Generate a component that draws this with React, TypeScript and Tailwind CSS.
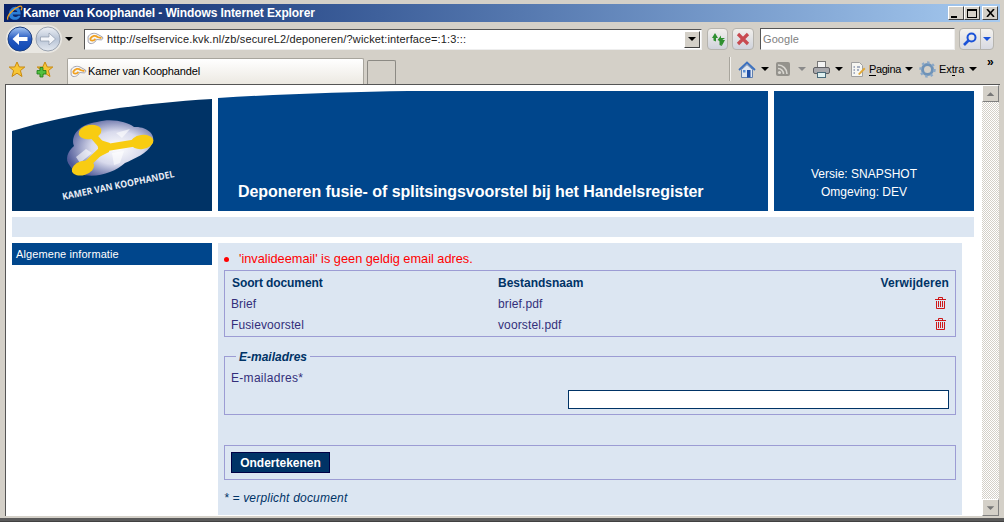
import React from 'react';

const UI = "font-['Liberation_Sans',Arial,sans-serif]";

function Caret({ dim }: { dim?: boolean }) {
  return <span className={`inline-block w-0 h-0 border-x-[4px] border-x-transparent border-t-[4px] ${dim ? 'border-t-[#8a8a8a]' : 'border-t-black'}`} />;
}

function PageIcon() {
  return (
    <svg width="17" height="14" viewBox="0 0 17 14">
      <path d="M1 5C2.5 1.5 7 .5 10 2L15.5 5C16.5 6.5 15 8.5 13 7.8L9.5 7.5C8 11.5 3 13 1.2 10Z" fill="#f6f6f6" stroke="#a4a4b0" />
      <path d="M3 7C5 3.5 8.5 3 10.5 5L14.5 6.2M3 7C4 9.5 6.5 9 8.5 6.8" fill="none" stroke="#f0a020" strokeWidth="1.8" />
    </svg>
  );
}

function NavButton({ back }: { back?: boolean }) {
  const id = back ? 'navBack' : 'navFwd';
  return (
    <svg width="26" height="26" viewBox="0 0 26 26">
      <defs>
        <linearGradient id={id} x1="0" y1="0" x2="0" y2="1">
          <stop offset="0" stopColor={back ? '#a8c8f4' : '#eef1f6'} />
          <stop offset="0.5" stopColor={back ? '#2458c0' : '#b8c4d6'} />
          <stop offset="1" stopColor={back ? '#0f49b4' : '#e4e9f0'} />
        </linearGradient>
      </defs>
      <circle cx="13" cy="13" r="12" fill={`url(#${id})`} stroke={back ? '#1c3f80' : '#9aa3b0'} />
      {back ? (
        <path d="M5.5 13L12 7V11H20.5V15H12V19Z" fill="#fff" />
      ) : (
        <path d="M20.5 13L14 7V11H5.5V15H14V19Z" fill="#f4f6fa" stroke="#8c98aa" strokeWidth="0.7" />
      )}
    </svg>
  );
}

function Star({ plus }: { plus?: boolean }) {
  return (
    <svg width="18" height="17" viewBox="0 0 18 17">
      <path d="M9 1L11.3 6H16.8L12.4 9.6L14 15.5L9 12.2L4 15.5L5.6 9.6L1.2 6H6.7Z" fill="#f7c637" stroke="#c98a10" />
      {plus && <path d="M5 6.5V9.5H2V13H5V16H8V13H11V9.5H8V6.5Z" fill="#52c040" stroke="#1c7a18" strokeWidth="0.8" transform="translate(-1,0)" />}
    </svg>
  );
}

function Trash() {
  return (
    <svg width="11" height="12" viewBox="0 0 11 12" fill="none" stroke="#cc0000" strokeWidth="0.9">
      <path d="M0 2.5H11M3.5 2.5V.5H7.5V2.5" />
      <path d="M1.5 4V11.5H9.5V4" />
      <path d="M3.5 4V10M5.5 4V10M7.5 4V10" />
    </svg>
  );
}

function Logo() {
  return (
    <svg width="200" height="120" viewBox="0 0 200 120" className="block">
      <defs>
        <radialGradient id="cloud" cx="0.58" cy="0.5" r="0.6">
          <stop offset="0" stopColor="#ffffff" />
          <stop offset="0.5" stopColor="#d8daec" />
          <stop offset="1" stopColor="#4f5a98" />
        </radialGradient>
      </defs>
      <path d="M0 40C60 22 130 12 200 8V120H0Z" fill="#003366" />
      <path d="M58 75C52 68 56 60 62 55C58 44 68 33 85 31C100 27 115 31 122 36C135 35 145 44 140 53C136 62 122 68 113 72C100 84 70 92 58 75Z" fill="url(#cloud)" />
      <path d="M64 66L74 58L80 62L68 72ZM100 62L112 60L108 72L102 74ZM104 42L118 38L110 47Z" fill="#ffffff" opacity="0.6" />
      <path d="M78 41L92 57L129 51M92 57L71 77" fill="none" stroke="#f8cc12" strokeWidth="7" />
      <path d="M85 48L98 52L97 61L87 66Z" fill="#f8cc12" />
      <ellipse cx="78" cy="41" rx="11.5" ry="7" fill="#f8cc12" transform="rotate(-10 78 41)" />
      <ellipse cx="130" cy="51" rx="11.5" ry="7" fill="#f8cc12" transform="rotate(-8 130 51)" />
      <ellipse cx="71" cy="77" rx="11.5" ry="7" fill="#f8cc12" transform="rotate(-18 71 77)" />
      <text x="0" y="0" transform="translate(51 109) rotate(-11.6)" fill="#e8ecf4" fontFamily="'Open Sans', sans-serif" fontSize="9.5" fontWeight="700" textLength="114" lengthAdjust="spacingAndGlyphs">KAMER VAN KOOPHANDEL</text>
    </svg>
  );
}

export default function App() {
  return (
    <div className={`w-[1004px] h-[522px] bg-[#d4d0c8] overflow-hidden flex flex-col pt-1 px-1 border-b border-[#404040] ${UI}`}>
      {/* title bar */}
      <div className="h-[18px] shrink-0 flex items-center bg-gradient-to-r from-[#0a246a] to-[#a6caf0] text-white">
        <svg width="17" height="18" viewBox="0 0 18 18" className="ml-0.5">
          <path d="M3 10.5C3 6 6.5 2.5 10 2.5C14 2.5 15.5 6 15.5 10.5H7C7.5 13.5 11 14 13 11.8H15.5C14 16.5 8 17.5 5 14.8C3.8 13.6 3 12 3 10.5ZM7 8H12C11.8 5.2 7.5 5 7 8Z" fill="#2b7fd8" />
          <path d="M2 16C0 12.5 8 4 14 2C17 1 17.5 3 16 6" fill="none" stroke="#f0a020" strokeWidth="1.3" />
        </svg>
        <span className="text-[12px] font-bold tracking-[-0.1px]">Kamer van Koophandel - Windows Internet Explorer</span>
        <div className="ml-auto mr-0.5 flex">
          {['min', 'max', 'close'].map(k => (
            <div key={k} className={`w-4 h-3.5 bg-[#d4d0c8] border border-t-white border-l-white border-r-[#404040] border-b-[#404040] flex items-center justify-center text-black ${k === 'close' ? 'ml-0.5' : ''}`}>
              {k === 'min' && <span className="w-[6px] h-[2px] bg-black mt-2 -ml-1" />}
              {k === 'max' && <span className="w-[10px] h-[9px] border border-black border-t-2" />}
              {k === 'close' && (
                <svg width="9" height="8" viewBox="0 0 9 8"><path d="M1 0L8 8M8 0L1 8" stroke="#000" strokeWidth="1.6" /></svg>
              )}
            </div>
          ))}
        </div>
      </div>

      {/* address row */}
      <div className="h-8 shrink-0 flex items-center pt-[2px]">
        <div className="flex items-center bg-[#e9e7e2] rounded-full ml-[2px] h-[28px] px-px">
          <NavButton back />
          <span className="w-[2px]" />
          <NavButton />
        </div>
        <span className="ml-[3px] flex"><Caret /></span>
        <div className="ml-[11px] w-[618px] h-[21px] bg-white border border-t-[#555] border-l-[#555] border-b-[#eee] border-r-[#eee] flex items-center pl-[2px]">
          <PageIcon />
          <span className="ml-[3px] text-[11px] leading-none tracking-[0.15px] text-[#222] whitespace-nowrap">http://selfservice.kvk.nl/zb/secureL2/deponeren/?wicket:interface=:1:3:::</span>
          <div className="ml-auto mr-px w-4 h-[17px] bg-[#d4d0c8] border border-t-white border-l-white border-r-[#404040] border-b-[#404040] flex items-center justify-center"><Caret /></div>
        </div>
        <div className="ml-[5px] w-[21px] h-[22px] rounded-[4px] border border-[#b6b4ae] bg-gradient-to-b from-[#f2f0ec] to-[#d0d3dc] flex items-center justify-center">
          <svg width="16" height="15" viewBox="0 0 16 15" fill="#2f9030">
            <path d="M2 6L5 1L8 6H6V9.5L3.5 8.5V6Z" />
            <path d="M7.5 8L11 3.5V6H15L11 9L12 14L9.5 13V9Z" />
            <path d="M9 8H15L12 13.5Z" />
          </svg>
        </div>
        <div className="ml-[4px] w-[22px] h-[22px] rounded-[4px] border border-[#b6b4ae] bg-gradient-to-b from-[#f2f0ec] to-[#d0d3dc] flex items-center justify-center">
          <svg width="14" height="14" viewBox="0 0 14 14"><path d="M2 2L12 12M12 2L2 12" stroke="#c84a50" strokeWidth="3.2" /></svg>
        </div>
        <div className="ml-[6px] w-[195px] h-[22px] bg-white border border-t-[#555] border-l-[#555] border-b-[#eee] border-r-[#eee] flex items-center pl-[2px] text-[11px] tracking-[0.1px] text-[#808080]">Google</div>
        <div className="ml-[4px] w-[35px] h-[22px] rounded-[4px] border border-[#b6b4ae] bg-gradient-to-b from-[#f4f2ee] to-[#d8dae2] flex">
          <div className="w-[21px] flex items-center justify-center border-r border-[#b6b4ae]">
            <svg width="14" height="14" viewBox="0 0 14 14" fill="none" stroke="#1a52d8" strokeWidth="2"><circle cx="8.5" cy="5.5" r="4" /><path d="M5.5 8.5L1 13" strokeWidth="2.6" /></svg>
          </div>
          <div className="flex-1 flex items-center justify-center"><span className="w-0 h-0 border-x-[4px] border-x-transparent border-t-[4px] border-t-[#1a52d8]" /></div>
        </div>
      </div>

      {/* favorites / command row */}
      <div className="h-[30px] shrink-0 flex items-end text-[11px] text-black">
        <div className="self-center flex items-center ml-[4px]">
          <Star />
          <span className="ml-[10px] flex"><Star plus /></span>
        </div>
        <div className="ml-[13px] w-[297px] h-[26px] bg-gradient-to-b from-white to-[#ece9e2] border border-[#a8a59d] border-b-0 rounded-t-[2px] flex items-center pl-[2px] gap-[1px]">
          <PageIcon />
          <span className="tracking-[-0.15px]">Kamer van Koophandel</span>
        </div>
        <div className="ml-[3px] w-[29px] h-6 bg-[#d4d0c8] border border-[#8c8a84] border-b-0 rounded-t-[2px]" />
        <div className="self-center ml-auto flex items-center h-full">
          <span className="w-[2px] h-6 bg-[#f4f2ee] border-l border-[#a8a59d] mr-[7px]" />
          <svg width="18" height="17" viewBox="0 0 18 17">
            <path d="M1 9L9 1.5L17 9" fill="none" stroke="#3a70c0" strokeWidth="1.8" />
            <path d="M3.5 8.5V16.5H14.5V8.5L9 3.5Z" fill="#dfe6f0" stroke="#6080b0" />
            <rect x="9" y="9" width="3.5" height="7.5" fill="#1f4fa8" />
            <rect x="5" y="9" width="2.5" height="2.5" fill="#5a90d8" />
          </svg>
          <span className="ml-[5px] flex"><Caret /></span>
          <svg width="14" height="14" viewBox="0 0 14 14" className="ml-[7px]">
            <rect width="14" height="14" rx="2" fill="#94928c" />
            <circle cx="3.5" cy="10.5" r="1.6" fill="#d8d6d0" />
            <path d="M2 6.5A5.5 5.5 0 0 1 7.5 12M2 3A9 9 0 0 1 11 12" fill="none" stroke="#d8d6d0" strokeWidth="1.6" />
          </svg>
          <span className="ml-[8px] flex"><Caret dim /></span>
          <svg width="17" height="17" viewBox="0 0 17 17" className="ml-[7px]">
            <rect x="4.5" y="0.5" width="8" height="6" fill="#f4f4f4" stroke="#777" />
            <rect x="0.5" y="6.5" width="16" height="6" rx="1.5" fill="#a8a8ac" stroke="#606064" />
            <rect x="4.5" y="11.5" width="8" height="5" fill="#dff0f0" stroke="#4a6a7a" />
          </svg>
          <span className="ml-[5px] flex"><Caret /></span>
          <svg width="16" height="17" viewBox="0 0 16 17" className="ml-[7px]">
            <path d="M1.5 1.5H9.5L12.5 4.5V15.5H1.5Z" fill="#f6f6f2" stroke="#a0a0a0" />
            <path d="M3.5 6H5M7 6H10M3.5 9H5M7 9H9M3.5 12H5" stroke="#5a6a90" />
            <path d="M8 13L14 6.5L15.5 8L9.5 14Z" fill="#e0a838" />
          </svg>
          <span className="ml-[3px] w-[31px] tracking-[-0.4px]"><span className="border-b border-black leading-none">P</span>agina</span>
          <span className="ml-[5px] flex"><Caret /></span>
          <svg width="17" height="17" viewBox="0 0 17 17" className="ml-[6px]" fill="none">
            <circle cx="8.5" cy="8.5" r="5" stroke="#6f93b8" strokeWidth="3" />
            <circle cx="8.5" cy="8.5" r="7" stroke="#8aa8c8" strokeWidth="2.4" strokeDasharray="2.4 3" />
          </svg>
          <span className="ml-[3px] w-[25px] tracking-[-0.1px]">Ex<span className="border-b border-black leading-none">t</span>ra</span>
          <span className="ml-[5px] flex"><Caret /></span>
          <span className="ml-[10px] w-[13px] -mt-[14px] text-[12px] font-bold leading-none">»</span>
        </div>
      </div>

      {/* browser viewport */}
      <div className="flex-1 min-h-0 flex border-t border-l border-[#555] mb-[2px] ml-[1px] bg-white">
        <div className="w-[975px] shrink-0 pl-[6px] pt-[6px] overflow-hidden text-[12px] text-[#332f7a]">
          <div className="flex gap-[6px]">
            <Logo />
            <div className="relative w-[550px] h-[120px] bg-[#00468c] flex items-end pl-5 pb-[9px]">
              <svg width="550" height="10" viewBox="0 0 550 10" className="absolute left-0 top-0">
                <path d="M0 0H190C130 1 60 3 0 7Z" fill="#fff" />
              </svg>
              <h1 className="text-[16px] leading-[20px] font-bold tracking-[-0.05px] text-white">Deponeren fusie- of splitsingsvoorstel bij het Handelsregister</h1>
            </div>
            <div className="w-[200px] h-[120px] bg-[#00468c] flex flex-col justify-end items-center pb-[10px] pr-5 text-white text-[12px] leading-[18px]">
              <span>Versie: SNAPSHOT</span>
              <span>Omgeving: DEV</span>
            </div>
          </div>
          <div className="w-[962px] h-5 mt-[6px] bg-[#dce6f2]" />
          <div className="flex gap-[6px] mt-[6px]">
            <div className="w-[200px] h-[22px] bg-[#00468c] text-white text-[11px] leading-[22px] pl-1 tracking-[0.1px]">Algemene informatie</div>
            <div className="w-[744px] h-[272px] bg-[#dce6f2] px-[6px] pt-[7px]">
              <div className="flex items-center h-[17px] text-[12.75px] text-[#ff0000]">
                <span className="w-[5px] h-[5px] rounded-full bg-[#ff0000] mr-[10px] mt-px" />
                'invalideemail' is geen geldig email adres.
              </div>
              <div className="mt-[3px] border border-[#9c9cd4] h-[67px] pl-[6px] pr-[6px]">
                <table className="w-full border-collapse">
                  <thead>
                    <tr className="h-[24px] text-[#003366]">
                      <th className="w-[267px] text-left font-semibold pl-px tracking-[-0.1px]">Soort document</th>
                      <th className="text-left font-semibold">Bestandsnaam</th>
                      <th className="text-right font-semibold tracking-[0.1px]">Verwijderen</th>
                    </tr>
                  </thead>
                  <tbody className="tracking-[0.12px]">
                    {[['Brief', 'brief.pdf'], ['Fusievoorstel', 'voorstel.pdf']].map(([soort, naam]) => (
                      <tr key={soort} className="h-[21px]">
                        <td className="align-top pt-[2px] leading-[14px]">{soort}</td>
                        <td className="align-top pt-[2px] leading-[14px]">{naam}</td>
                        <td className="align-top pt-[2px]"><div className="flex justify-end pr-[3px]"><Trash /></div></td>
                      </tr>
                    ))}
                  </tbody>
                </table>
              </div>
              <fieldset className="mt-[11px] border border-[#9c9cd4] h-[67px] px-[6px]">
                <legend className="ml-[5px] px-[3px] pt-[2px] text-[12px] leading-[14px] font-bold italic text-[#003366]">E-mailadres</legend>
                <div className="leading-[14px] mt-[7px] tracking-[0.3px]">E-mailadres*</div>
                <div className="flex justify-end mt-[5px]">
                  <input className="w-[381px] h-[19px] bg-white border border-[#003366] outline-none" />
                </div>
              </fieldset>
              <div className="mt-[30px] h-[35px] border border-[#9c9cd4] flex items-center pl-[6px]">
                <button className="w-[99px] h-[21px] bg-[#003366] border border-[#000044] text-white text-[12px] font-bold">Ondertekenen</button>
              </div>
              <div className="mt-[11px] leading-[14px] italic tracking-[0.2px] text-[#003366]">* = verplicht document</div>
            </div>
          </div>
        </div>
        {/* scrollbar */}
        <div className="w-[17px] shrink-0 flex flex-col ml-px bg-[repeating-conic-gradient(#d4d0c8_0_25%,#ffffff_0_50%)] bg-[length:2px_2px]">
          {['M4 9L8 5L12 9Z', 'M4 5L8 9L12 5Z'].map((d, i) => (
            <div key={d} className={`w-full h-[17px] bg-[#d4d0c8] border border-t-white border-l-white border-r-[#808080] border-b-[#808080] flex items-center justify-center ${i === 1 ? 'mt-auto' : ''}`}>
              <svg width="15" height="14" viewBox="0 0 16 14"><path d={d} fill="#777" /></svg>
            </div>
          ))}
        </div>
        <div className="w-[2px] shrink-0 bg-[#d4d0c8]" />
      </div>
      <div className="h-[3px] -mx-1 shrink-0 bg-[#5a5a5a]" />
    </div>
  );
}
